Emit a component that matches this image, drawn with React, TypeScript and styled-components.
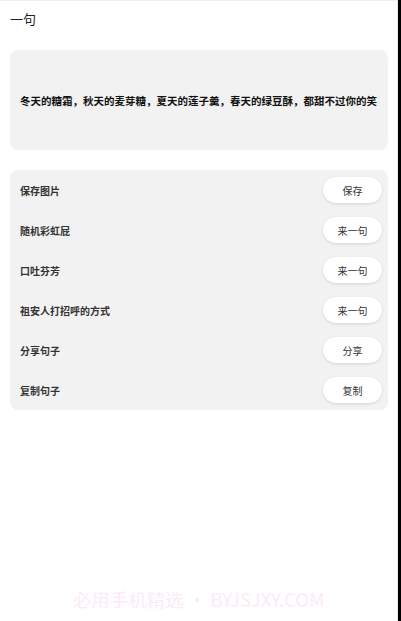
import styled, { createGlobalStyle } from 'styled-components';

const GlobalStyle = createGlobalStyle`
    html, body {
        margin: 0;
        padding: 0;
        background: #000;
    }
    body {
        font-family: "Noto Sans CJK SC", "Noto Sans", sans-serif;
        color: #222;
    }
`

const actions = [
    { label: '保存图片', button: '保存' },
    { label: '随机彩虹屁', button: '来一句' },
    { label: '口吐芬芳', button: '来一句' },
    { label: '祖安人打招呼的方式', button: '来一句' },
    { label: '分享句子', button: '分享' },
    { label: '复制句子', button: '复制' },
]

const App = () => {
    return (
        <>
            <GlobalStyle />
            <Page>
                <Title>一句</Title>
                <QuoteCard>
                    <Quote>冬天的糖霜，秋天的麦芽糖，夏天的莲子羹，春天的绿豆酥，都甜不过你的笑</Quote>
                </QuoteCard>
                <ActionCard>
                    {actions.map((a) => (
                        <Row key={a.label}>
                            <Label>{a.label}</Label>
                            <Button>{a.button}</Button>
                        </Row>
                    ))}
                </ActionCard>
                <Watermark>必用手机精选 • BYJSJXY.COM</Watermark>
            </Page>
        </>
    )
}

const Page = styled.div`
    position: relative;
    width: 398px;
    height: 621px;
    box-sizing: border-box;
    background: #fff;
    border-right: 1px solid #e8e8e8;
    border-top: 1px solid #f0f0f0;
    padding: 0 9px 0 10px;
    overflow: hidden;
`

const Title = styled.div`
    font-size: 13px;
    line-height: 36px;
    height: 36px;
    color: #222;
    margin-bottom: 13px;
`

const QuoteCard = styled.div`
    display: flex;
    align-items: center;
    height: 100px;
    background: #f2f2f2;
    border-radius: 8px;
    padding: 0 10px;
    margin-bottom: 20px;
`

const Quote = styled.div`
    font-size: 10.5px;
    font-weight: 700;
    color: #111;
    white-space: nowrap;
`

const ActionCard = styled.div`
    background: #f2f2f2;
    border-radius: 8px;
    padding: 0 6px 0 10px;
`

const Row = styled.div`
    display: flex;
    align-items: center;
    justify-content: space-between;
    height: 40px;
`

const Label = styled.div`
    font-size: 10px;
    font-weight: 700;
    color: #333;
`

const Button = styled.button`
    width: 59px;
    height: 26px;
    border: none;
    border-radius: 13px;
    background: #fff;
    box-shadow: 0 1px 3px rgba(0, 0, 0, 0.12);
    font-family: inherit;
    font-size: 10px;
    color: #333;
    padding: 0;
    cursor: pointer;
`

const Watermark = styled.div`
    position: absolute;
    left: 0;
    right: 0;
    bottom: 9px;
    text-align: center;
    font-size: 18.5px;
    color: #fdeaf7;
    font-family: "Noto Sans CJK SC", "Noto Sans", sans-serif;
    pointer-events: none;
`

export default App;
